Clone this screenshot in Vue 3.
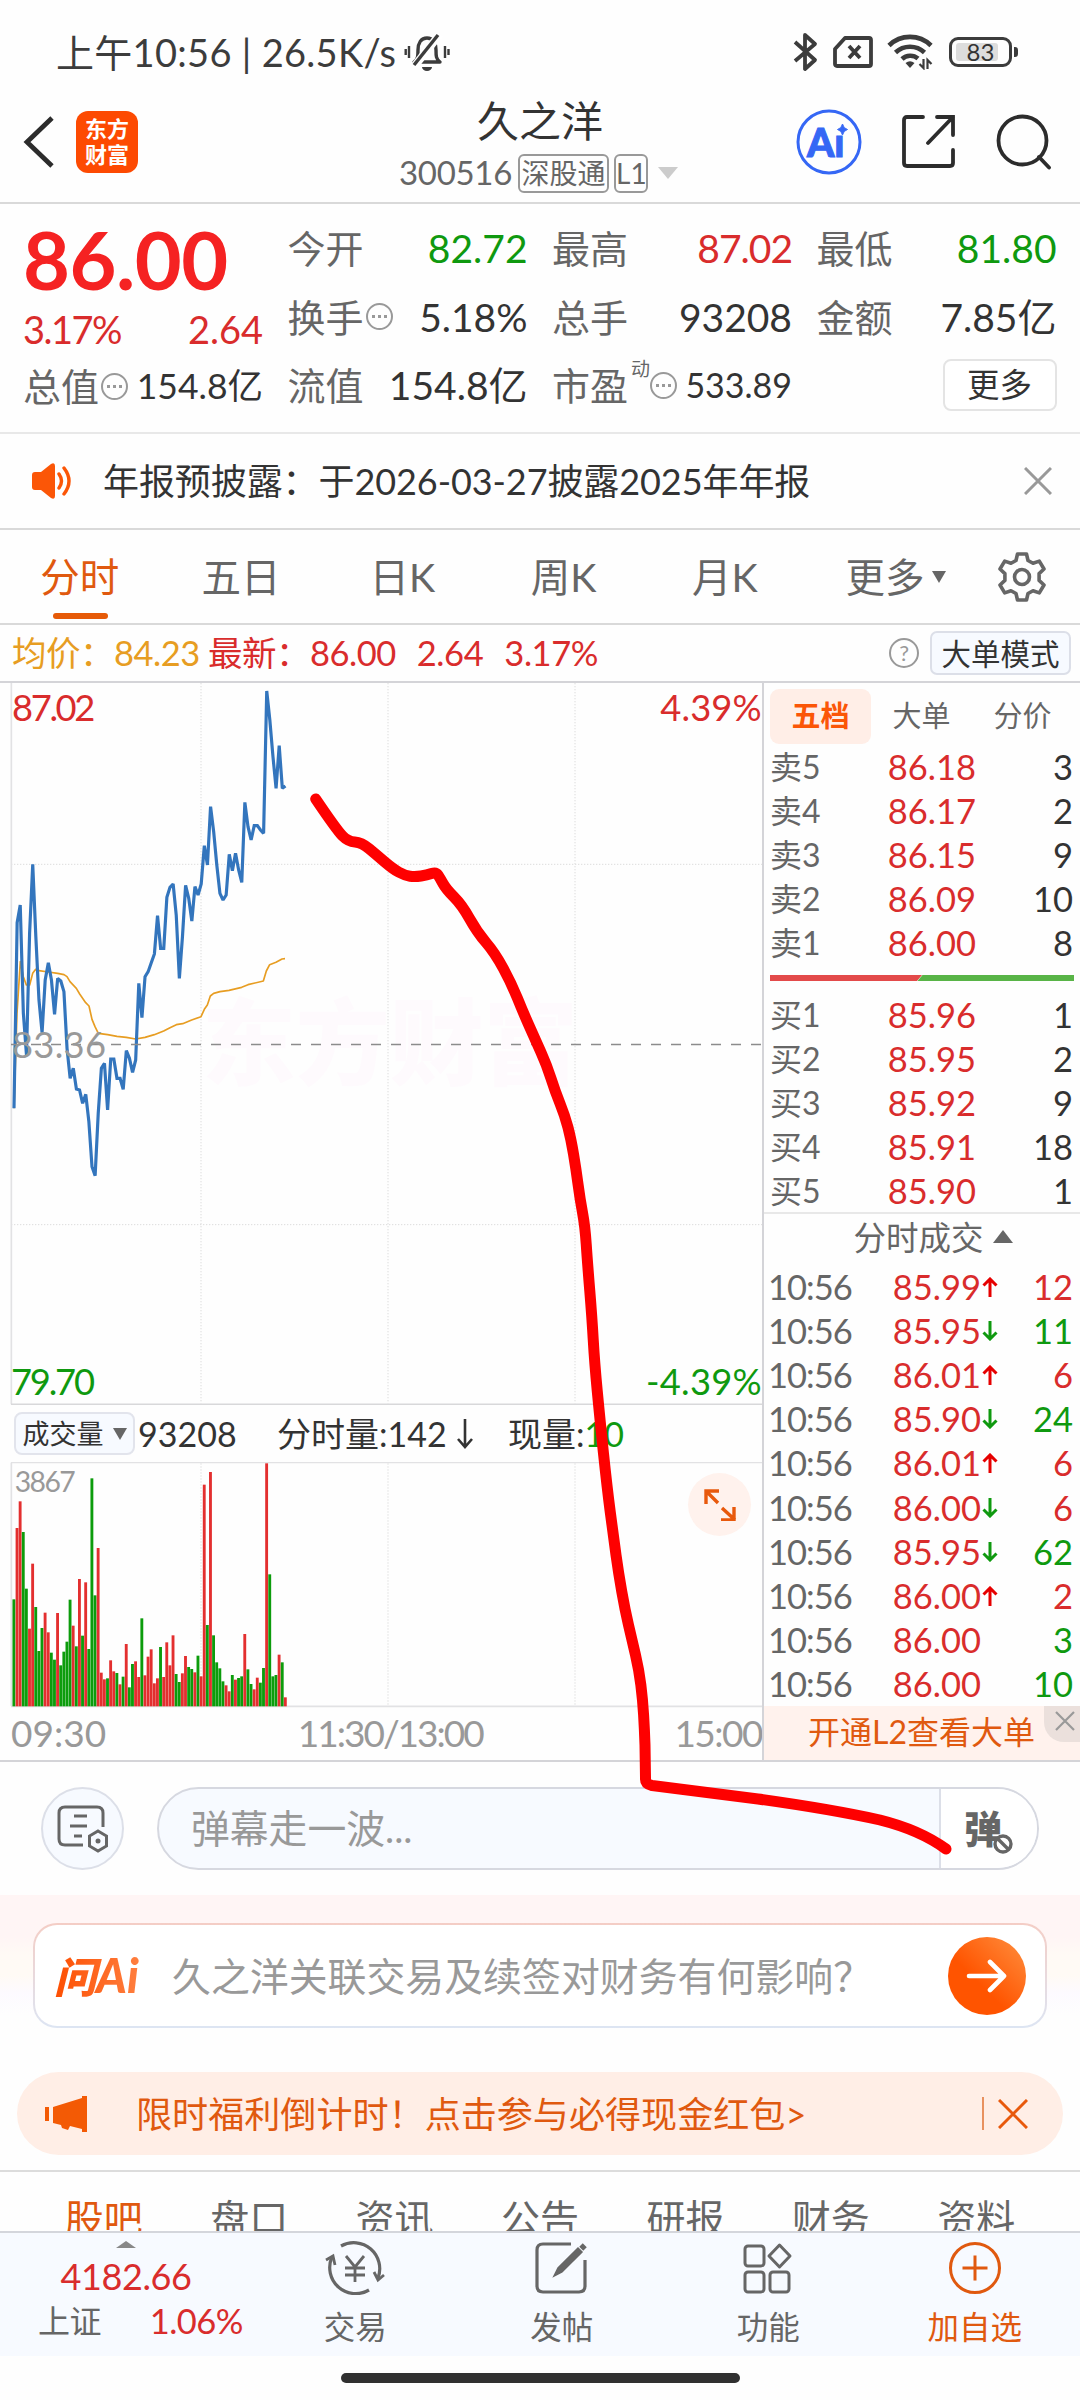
<template>
  <div class="page">
    <div class="status">
      <span class="status-text">上午10:56 | 26.5K/s</span>
      <svg class="status-bell" width="46" height="40" viewBox="0 0 46 40" fill="none" stroke="#3c3c3c" stroke-width="3.4">
        <path d="M10 30h26c-4-3-4-6-4-12 0-7-3-12-9-12s-9 5-9 12c0 6 0 9-4 12z" stroke-linejoin="round" />
        <path d="M36 2L9 36" stroke="#fff" stroke-width="8" />
        <path d="M34 3L10 33" />
        <path d="M5 14v12M1.700 17v6M41 14v12M44.500 17v6" stroke-width="2.400" />
        <path d="M18 35h10a5 4 0 0 1-10 0z" fill="#3c3c3c" stroke="none" />
      </svg>
      <div class="status-right">
        <svg width="26" height="40" viewBox="0 0 26 40" fill="none" stroke="#3c3c3c" stroke-width="3.8">
          <path d="M2 10l20 18-10 9V3l10 9L2 29" stroke-linejoin="round" />
        </svg>
        <svg width="40" height="32" viewBox="0 0 40 32" fill="none" stroke="#3c3c3c" stroke-width="3.8">
          <path d="M12 2h24q2 0 2 2v24q0 2-2 2H4q-2 0-2-2V13z" stroke-linejoin="round" />
          <path d="M16 10l11 12M27 10L16 22" />
        </svg>
        <svg width="48" height="36" viewBox="0 0 48 36" fill="none" stroke="#3c3c3c" stroke-width="4.600">
          <path d="M2 11.500a30 30 0 0 1 42 0M8.500 18.500a21 21 0 0 1 29 0M15 25a12 12 0 0 1 16-.5" />
          <path d="M23 34l-4.500-5q4.500-3.500 9 0z" fill="#3c3c3c" stroke="none" />
          <path d="M36.500 25v9l-4-4M40.500 35v-9l4 4" stroke-width="2.200" />
        </svg>
        <div class="battery"><i></i><b>83</b></div>
      </div>
    </div>

    <header class="header">
      <svg class="back" width="32" height="52" viewBox="0 0 32 52" fill="none" stroke="#2c2c2c" stroke-width="4.800">
        <path d="M29 2L4 26l25 24" />
      </svg>
      <div class="logo"><span>东方</span><span>财富</span></div>
      <div class="title">
        <h1>久之洋</h1>
        <div class="subtitle">
          <span class="code">300516</span>
          <span class="tag">深股通</span>
          <span class="tag tag-l1">L1</span>
          <i class="tri-down light"></i>
        </div>
      </div>
      <div class="header-icons">
        <div class="ai-icon">
          <svg width="66" height="66" viewBox="0 0 66 66">
            <circle cx="33" cy="33" r="31" fill="none" stroke="#3567f5" stroke-width="3" />
            <path d="M46.500 15q1 4.500 5 5.500-4 1-5 5.500-1-4.500-5-5.500 4-1 5-5.500z" fill="#3567f5" stroke="#3567f5" />
          </svg>
          <span>Aı</span>
        </div>
        <svg width="54" height="54" viewBox="0 0 54 54" fill="none" stroke="#2c2c2c" stroke-width="3.800" stroke-linecap="round">
          <path d="M21 2H5Q2 2 2 5v43q0 3 3 3h43q3 0 3-3V35" />
          <path d="M35 2h16v18M51 2L26 28" />
        </svg>
        <svg width="56" height="56" viewBox="0 0 56 56" fill="none" stroke="#2c2c2c" stroke-width="3.800" stroke-linecap="round">
          <circle cx="26.500" cy="26.500" r="24" />
          <path d="M43 43l10 10.500" />
        </svg>
      </div>
    </header>

    <section class="quote">
      <div class="col col-main">
        <div class="last">86.00</div>
        <div class="change"><span>3.17%</span><span>2.64</span></div>
        <div class="cell"><label>总值<i class="dots"></i></label><em class="mid">154.8亿</em></div>
      </div>
      <div class="col">
        <div class="cell"><label>今开</label><em class="green">82.72</em></div>
        <div class="cell"><label>换手<i class="dots"></i></label><em>5.18%</em></div>
        <div class="cell"><label>流值</label><em>154.8亿</em></div>
      </div>
      <div class="col">
        <div class="cell"><label>最高</label><em class="red tight">87.02</em></div>
        <div class="cell"><label>总手</label><em>93208</em></div>
        <div class="cell"><label>市盈<sup>动</sup><i class="dots"></i></label><em class="small">533.89</em></div>
      </div>
      <div class="col">
        <div class="cell"><label>最低</label><em class="green">81.80</em></div>
        <div class="cell"><label>金额</label><em>7.85亿</em></div>
        <div class="cell cell-end"><button class="more">更多</button></div>
      </div>
    </section>

    <section class="notice">
      <svg width="42" height="36" viewBox="0 0 42 36">
        <path d="M1 12q0-3 3-3h6L20 1q4-2 4 2v30q0 4-4 2l-10-8H4q-3 0-3-3z" fill="#fb5607" />
        <path d="M28 11q5 7 0 14M33 5q10 13 0 26" fill="none" stroke="#fb5607" stroke-width="3.400" stroke-linecap="round" />
      </svg>
      <p>年报预披露：于2026-03-27披露2025年年报</p>
      <svg width="28" height="28" viewBox="0 0 28 28" stroke="#999" stroke-width="3"><path d="M1 1l26 26M27 1L1 27" /></svg>
    </section>

    <nav class="tabs">
      <span v-for="(t, i) in periods" :key="t" :class="{ active: i === 0 }">{{ t }}</span>
      <span class="tab-more">更多<i class="tri-down"></i></span>
      <svg class="gear" width="50" height="50" viewBox="0 0 50 50" fill="none" stroke="#666" stroke-width="3.600">
        <path d="M20.500 2h9l1.500 6.500 5 2.800 6.300-2.200 4.700 7.900-4.900 4.600v6.800l4.900 4.600-4.700 7.900-6.300-2.200-5 2.800-1.500 6.500h-9L19 41.500l-5-2.800-6.300 2.200L3 33l4.900-4.600v-6.800L3 17l4.700-7.900L14 11.300l5-2.800z" stroke-linejoin="round" />
        <circle cx="25" cy="25" r="7.500" />
      </svg>
    </nav>

    <div class="avg-row">
      <span class="avg">均价：84.23</span>
      <span class="new">最新：86.00</span>
      <span class="new">2.64</span>
      <span class="new">3.17%</span>
      <i class="help">?</i>
      <button class="mode">大单模式</button>
    </div>

    <main class="market">
      <div class="left">
        <svg class="plot" width="762" height="722" viewBox="0 9 2286 2166">
          <text class="watermark" x="605" y="1195">东方财富</text>
          <g stroke="#dcdcdc" stroke-width="3" fill="none">
            <path d="M603 9V2170M1164 9V2170M1725 9V2170" stroke-dasharray="4 5" />
            <path d="M33 553H2286M33 1634H2286" stroke-dasharray="4 5" />
            <path d="M34 9V2173" stroke="#e2e2e4" stroke-width="5" />
            <path d="M33 2173H2286" stroke="#d8d8da" stroke-width="5" />
          </g>
          <polyline :points="avgPoints" fill="none" stroke="#e79d22" stroke-width="5" stroke-linejoin="round" />
          <polyline :points="pricePoints" fill="none" stroke="#3375bd" stroke-width="9.500" stroke-linejoin="miter" stroke-miterlimit="2" />
          <path d="M33 1093.500H2286" stroke="#8c8c8c" stroke-width="4" stroke-dasharray="30 30" />
          <g class="plot-text">
            <text x="36" y="122" fill="#d92c2c" textLength="250">87.02</text>
            <text x="1981" y="122" fill="#d92c2c" textLength="304">4.39%</text>
            <text x="36" y="1133" fill="#999" textLength="282">83.36</text>
            <text x="33" y="2144" fill="#0f990f" textLength="252">79.70</text>
            <text x="1938" y="2144" fill="#0f990f" textLength="347">-4.39%</text>
          </g>
        </svg>

        <div class="vol-head">
          <button class="indicator">成交量<i class="tri-down"></i></button>
          <span class="vol-total">93208</span>
          <span class="vol-minute">分时量:142<svg width="16" height="30" viewBox="0 0 16 30" fill="none" stroke="#333" stroke-width="2.600"><path d="M8 0v28M1 20l7 8 7-8" /></svg></span>
          <span class="vol-now">现量:<b>10</b></span>
        </div>

        <div class="vol-wrap">
          <svg width="762" height="246" viewBox="0 305 2286 738">
            <g stroke="#dcdcdc" stroke-width="3" fill="none">
              <path d="M603 309V1037M1164 309V1037M1725 309V1037" stroke-dasharray="4 5" />
              <path d="M33 307H2286" stroke="#e2e2e4" stroke-width="4" />
              <path d="M34 307V1037" stroke="#e2e2e4" stroke-width="5" />
              <path d="M33 1038H2286" stroke="#e2e2e4" stroke-width="5" />
            </g>
            <rect
              v-for="bar in bars"
              :key="bar.x"
              :x="bar.x"
              :y="bar.top"
              width="8.600"
              :height="1038 - bar.top"
              :fill="bar.up ? '#e32f2f' : '#0c9c0c'"
            />
            <text class="vol-max" x="44" y="395" textLength="183">3867</text>
          </svg>
          <div class="expand">
            <svg width="32" height="32" viewBox="0 0 32 32" fill="none" stroke="#e8590c" stroke-width="3.400">
              <path d="M2 15V2h13M2 2l12 12M30 18v13H17M31 31L18 19" />
            </svg>
          </div>
        </div>

        <div class="axis"><span>09:30</span><span>11:30/13:00</span><span>15:00</span></div>
      </div>

      <aside class="right">
        <div class="book-tabs"><span class="on">五档</span><span>大单</span><span>分价</span></div>
        <div v-for="r in asks" :key="r[0]" class="book-row">
          <span>{{ r[0] }}</span><em>{{ r[1] }}</em><b>{{ r[2] }}</b>
        </div>
        <div class="ratio">
          <svg width="304" height="6" viewBox="0 0 304 6">
            <path d="M0 0h152l-5 6H0z" fill="#e34a4a" />
            <path d="M152.500 0H304v6H147.500z" fill="#58b447" />
          </svg>
        </div>
        <div v-for="r in bids" :key="r[0]" class="book-row">
          <span>{{ r[0] }}</span><em>{{ r[1] }}</em><b>{{ r[2] }}</b>
        </div>
        <div class="deal-head">分时成交<i class="tri-up"></i></div>
        <div v-for="(d, i) in deals" :key="i" class="deal-row">
          <span>10:56</span>
          <em>{{ d[0] }}</em>
          <svg width="16" height="20" viewBox="0 0 16 20" fill="none" stroke-width="3">
            <path v-if="d[1] === 'up'" d="M8 20V2M1.500 8.500L8 2l6.500 6.500" stroke="#e60000" />
            <path v-if="d[1] === 'down'" d="M8 0v18M1.500 11.500L8 18l6.500-6.500" stroke="#0f990f" />
          </svg>
          <b :class="d[3]">{{ d[2] }}</b>
        </div>
        <div class="l2">
          开通L2查看大单
          <i><svg width="20" height="20" viewBox="0 0 20 20" stroke="#999" stroke-width="2.200"><path d="M1 1l18 18M19 1L1 19" /></svg></i>
        </div>
      </aside>
    </main>

    <section class="danmu">
      <div class="danmu-set">
        <svg width="52" height="48" viewBox="0 0 52 48" fill="none" stroke="#666" stroke-width="3">
          <path d="M26 40H8q-6 0-6-6V8q0-6 6-6h32q6 0 6 6v14M17 11h13M13 21h17M17 31h8" />
          <path d="M41 26l8.500 5v10L41 46l-8.500-5V31z" />
          <circle cx="41" cy="36" r="2.500" fill="#666" stroke="none" />
        </svg>
      </div>
      <div class="danmu-input">
        <span>弹幕走一波...</span>
        <div class="danmu-toggle">
          <b>弹</b>
          <svg width="22" height="22" viewBox="0 0 22 22" stroke="#666" stroke-width="3.400">
            <circle cx="11" cy="11" r="8" fill="#fff" />
            <path d="M6 6l10 10" />
          </svg>
        </div>
      </div>
    </section>

    <section class="ask">
      <div class="ask-box">
        <span class="ask-logo">问<b>Ai</b></span>
        <p>久之洋关联交易及续签对财务有何影响？</p>
        <div class="ask-go">
          <svg width="42" height="34" viewBox="0 0 42 34" fill="none" stroke="#fff" stroke-width="4.600" stroke-linecap="round" stroke-linejoin="round">
            <path d="M3 17h35M24 3l14 14-14 14" />
          </svg>
        </div>
      </div>
    </section>

    <section class="promo">
      <svg width="42" height="36" viewBox="0 0 42 36" fill="#f35a05">
        <path d="M0 11h4v14H0zM8 11L37 2V0h5v36h-5v-3l-12-3-2 4-6-2-1-3-8-2z" />
      </svg>
      <p>限时福利倒计时！点击参与必得现金红包&gt;</p>
      <i class="bar"></i>
      <svg width="30" height="30" viewBox="0 0 30 30" stroke="#e8590c" stroke-width="3"><path d="M1 1l28 28M29 1L1 29" /></svg>
    </section>

    <nav class="sub-tabs">
      <span v-for="(t, i) in sections" :key="t" :class="{ active: i === 0 }">{{ t }}</span>
    </nav>

    <footer class="footer">
      <div class="index">
        <i class="tri-up small"></i>
        <div class="index-value">4182.66</div>
        <div class="index-row"><span>上证</span><b>1.06%</b></div>
      </div>
      <div class="foot-item">
        <svg width="60" height="54" viewBox="0 0 60 54" fill="none" stroke="#666" stroke-width="3.200">
          <path d="M16 5a26 26 0 0 1 37 32M44 49A26 26 0 0 1 7 16" />
          <path d="M1 19l7-4 2 9M59 34l-6 5-4-8" stroke-width="2.800" />
          <path d="M21 15l9 11 9-11M30 26v15M20 27h20M20 34h20" stroke-width="2.800" />
        </svg>
        <span>交易</span>
      </div>
      <div class="foot-item">
        <svg width="54" height="54" viewBox="0 0 54 54" fill="none" stroke="#666" stroke-width="3.200">
          <path d="M36 3H8Q2 3 2 9v36q0 6 6 6h36q6 0 6-6V19" />
          <path d="M19 35l4-8L43 7l4 4-20 20z" fill="#666" stroke-width="1.500" />
          <path d="M46 4l4 4" stroke-width="5" />
        </svg>
        <span>发帖</span>
      </div>
      <div class="foot-item">
        <svg width="50" height="54" viewBox="0 0 50 54" fill="none" stroke="#666" stroke-width="3">
          <rect x="2" y="5" width="19" height="20" rx="3" />
          <rect x="2" y="31" width="19" height="20" rx="3" />
          <rect x="27" y="31" width="19" height="20" rx="3" />
          <path d="M36.500 4L47 15 36.500 26 26 15z" stroke-linejoin="round" />
        </svg>
        <span>功能</span>
      </div>
      <div class="foot-item add">
        <svg width="54" height="54" viewBox="0 0 54 54" fill="none" stroke="#e0590f" stroke-width="3">
          <circle cx="27" cy="27" r="24.500" />
          <path d="M27 14.500v25M14.500 27h25" />
        </svg>
        <span>加自选</span>
      </div>
    </footer>
    <div class="home"><i></i></div>

    <svg class="scribble" width="1080" height="2400" viewBox="0 0 1080 2400">
      <path :d="scribblePath" fill="none" stroke="#fe0000" stroke-width="11" stroke-linecap="round" stroke-linejoin="round" />
    </svg>
  </div>
</template>

<script setup>
const periods = ['分时', '五日', '日K', '周K', '月K'];
const sections = ['股吧', '盘口', '资讯', '公告', '研报', '财务', '资料'];

const asks = [
  ['卖5', '86.18', 3],
  ['卖4', '86.17', 2],
  ['卖3', '86.15', 9],
  ['卖2', '86.09', 10],
  ['卖1', '86.00', 8],
];
const bids = [
  ['买1', '85.96', 1],
  ['买2', '85.95', 2],
  ['买3', '85.92', 9],
  ['买4', '85.91', 18],
  ['买5', '85.90', 1],
];
const deals = [
  ['85.99', 'up', 12, 'red'],
  ['85.95', 'down', 11, 'green'],
  ['86.01', 'up', 6, 'red'],
  ['85.90', 'down', 24, 'green'],
  ['86.01', 'up', 6, 'red'],
  ['86.00', 'down', 6, 'red'],
  ['85.95', 'down', 62, 'green'],
  ['86.00', 'up', 2, 'red'],
  ['86.00', '', 3, 'green'],
  ['86.00', '', 10, 'green'],
];

// 每分钟一个点
const STEP = 9.36;
const priceY = [
  1285, 728, 675, 1000, 1125, 760, 553, 770, 960, 1058, 900, 848, 900, 1003, 895, 903,
  935, 1105, 1195, 1165, 1227, 1230, 1270, 1243, 1325, 1460, 1487, 1300, 1165, 1150, 1290, 1137,
  1137, 1195, 1195, 1228, 1112, 1135, 1177, 1140, 910, 1013, 890, 875, 848, 822, 707, 805,
  805, 652, 622, 612, 705, 895, 770, 616, 655, 723, 620, 645, 612, 497, 555, 380,
  455, 555, 640, 660, 645, 523, 572, 520, 570, 607, 367, 440, 480, 437, 437, 450,
  460, 33, 120, 230, 325, 197, 325, 318,
];
const pricePoints = priceY.map((y, i) => `${(42 + i * STEP).toFixed(1)},${y}`).join(' ');

const avgPoints =
  '42,1285 51,1000 61,845 70,890 79,915 89,915 98,880 107,868 117,872 145,876 173,880 192,884 201,890 ' +
  '210,905 229,925 239,942 257,968 267,978 276,1018 285,1040 295,1060 323,1064 351,1069 379,1072 407,1077 ' +
  '435,1072 463,1064 491,1053 510,1043 529,1034 548,1031 575,1020 603,1010 613,988 622,975 631,948 641,940 ' +
  '660,935 687,931 725,922 744,914 790,903 799,873 809,854 828,847 846,837 855,836';

// 正数为红柱，负数为绿柱
const volumes = [
  -717, 503, 423, -515, -685, 805, 610, -740, -872, -803, 757, 816, -877, -898, 758, -915,
  -874, -844, -718, 796, -858, 656, -826, 666, -866, -354, -705, 563, 937, 957, -954, 900,
  933, -938, 972, -949, 851, -981, -911, 903, 950, -774, 945, 889, 867, 969, 954, -860,
  950, 846, 915, 825, -941, -965, 939, 887, -920, -926, 936, -886, 948, 373, -794, 335,
  -825, -906, -924, -963, 975, 993, -944, 958, -953, -948, 821, -927, -971, 987, 952, -967,
  -923, 309, -642, -948, -944, 883, -906, 1011,
];
const bars = volumes.map((v, i) => ({
  x: +(37.4 + i * STEP).toFixed(1),
  top: Math.abs(v),
  up: v > 0,
}));

const scribble = [
  [315.7, 799], [336.7, 830], [348, 841.5], [361.7, 842.5], [376.7, 855], [393, 869], [405, 875.5], [415, 877],
  [427, 875], [436, 872], [440, 878], [446, 889], [462, 905], [477, 932], [495, 953], [511.7, 984],
  [523, 1012], [535, 1039], [546.7, 1065], [555, 1091], [565, 1116], [571, 1139], [576, 1169], [580, 1199],
  [585, 1226], [587.5, 1263], [592, 1318], [594.5, 1362], [600, 1420], [607, 1487], [613.5, 1537], [618.5, 1573],
  [625, 1610], [632, 1640], [639, 1670], [642.7, 1700], [644.5, 1730], [645.5, 1760],
];
let scribblePath = `M${scribble[0].join(' ')}`;
for (let i = 1; i < scribble.length - 1; i++) {
  const [x, y] = scribble[i];
  const [nx, ny] = scribble[i + 1];
  scribblePath += `Q${x} ${y} ${(x + nx) / 2} ${(y + ny) / 2}`;
}
scribblePath += 'L645.5 1778Q645 1784 652 1785.500L758 1799Q830 1809 880 1820Q920 1830 946 1849';
</script>

<style>
body {
  background: #fff;
}
</style>

<style scoped>
.page {
  position: relative;
  width: 1080px;
  height: 2400px;
  overflow: hidden;
  background: #fefefe;
  color: #333;
  font-family: Lato, "Noto Sans CJK SC", sans-serif;
  display: flex;
  flex-direction: column;
}

.page * {
  box-sizing: border-box;
}

.page > * {
  flex-shrink: 0;
}

svg {
  display: block;
  flex-shrink: 0;
}

i,
em {
  font-style: normal;
}

b {
  font-weight: 400;
}

button {
  font-family: inherit;
  padding: 0;
  color: #333;
  white-space: nowrap;
}

.red {
  color: #d92c2c;
}

.green {
  color: #0f990f;
}

.tri-down {
  display: inline-block;
  border: 7px solid transparent;
  border-top: 12px solid #666;
  border-bottom: 0;
}

.tri-down.light {
  border-width: 12px 10px 0;
  border-top-color: #ccc;
}

.tri-up {
  display: inline-block;
  border: 10px solid transparent;
  border-bottom: 13px solid #666;
  border-top: 0;
}

/* 状态栏 */
.status {
  height: 100px;
  padding: 4px 61px 0 56px;
  display: flex;
  align-items: center;
}

.status-text {
  font-size: 38px;
  line-height: 50px;
  padding-bottom: 1px;
  color: #3c3c3c;
  letter-spacing: 0.3px;
  white-space: nowrap;
}

.status-bell {
  margin-left: 8px;
}

.status-right {
  margin-left: auto;
  display: flex;
  align-items: center;
  gap: 14px;
}

.battery {
  position: relative;
  width: 63px;
  height: 30px;
  margin-right: 7px;
  border: 3px solid #3c3c3c;
  border-radius: 9px;
}

.battery i {
  display: block;
  width: 42px;
  height: 18px;
  margin: 3px 4px;
  border-radius: 3px;
  background: #ddd;
}

.battery::after {
  content: "";
  position: absolute;
  right: -9px;
  top: 7px;
  width: 4px;
  height: 10px;
  border-radius: 0 3px 3px 0;
  background: #3c3c3c;
}

.battery b {
  position: absolute;
  inset: 0;
  text-align: center;
  font-size: 24px;
  line-height: 24px;
}

/* 头部 */
.header {
  position: relative;
  height: 104px;
  border-bottom: 2px solid #d9d9d9;
  display: flex;
  align-items: center;
  padding: 0 28px 19px 23px;
}

.logo {
  width: 62px;
  height: 62px;
  margin-left: 21px;
  border-radius: 12px;
  background: #fd4a02;
  color: #fff;
  font-size: 22px;
  font-weight: 700;
  line-height: 26px;
  display: flex;
  flex-direction: column;
  align-items: center;
  justify-content: center;
}

.title {
  width: 300px;
  margin-left: 261px;
  padding-top: 14px;
}

.title h1 {
  position: relative;
  top: -5px;
  margin: 0 0 0 -18px;
  font-size: 42px;
  line-height: 44px;
  font-weight: 400;
  text-align: center;
}

.subtitle {
  display: flex;
  align-items: center;
  height: 40px;
  margin-top: 5px;
  color: #666;
  font-size: 33px;
  line-height: 40px;
}

.code {
  width: 119px;
  padding-bottom: 2px;
  letter-spacing: -0.3px;
}

.tag {
  width: 91px;
  height: 39px;
  border: 2px solid #999;
  border-radius: 6px;
  font-size: 28px;
  line-height: 34px;
  text-align: center;
  white-space: nowrap;
}

.tag-l1 {
  width: 34px;
  margin: 0 10px 0 5px;
}

.header-icons {
  display: flex;
  align-items: center;
  margin-left: auto;
}

.header-icons > * {
  margin-left: 40px;
}

.ai-icon {
  position: relative;
}

.ai-icon span {
  position: absolute;
  left: 11px;
  top: 11px;
  font-size: 39px;
  line-height: 44px;
  font-weight: 900;
  color: #3567f5;
  -webkit-text-stroke: 1px #3567f5;
}

/* 报价 */
.quote {
  height: 230px;
  padding: 10px 23px 0;
  border-bottom: 2px solid #e8e8e8;
  display: flex;
  gap: 24.500px;
}

.col {
  width: 240px;
}

.last {
  height: 90px;
  font-size: 81px;
  line-height: 90px;
  font-weight: 700;
  letter-spacing: -0.5px;
  color: #f52222;
}

.change {
  height: 48px;
  line-height: 50px;
  font-size: 38px;
  color: #d92c2c;
  display: flex;
  justify-content: space-between;
}

.change span:first-child {
  letter-spacing: -1.500px;
}

.cell {
  height: 68.500px;
  line-height: 68px;
  display: flex;
  align-items: center;
  justify-content: space-between;
  white-space: nowrap;
}

.cell label {
  position: relative;
  display: flex;
  align-items: center;
  font-size: 38px;
  color: #666;
}

.cell em {
  font-size: 39px;
}

.cell em.tight {
  letter-spacing: -1px;
}

.cell em.mid {
  font-size: 35.500px;
}

.cell em.small {
  font-size: 34px;
}

.cell sup {
  align-self: flex-start;
  margin: 5px 0 0 3px;
  font-size: 19px;
  line-height: 26px;
  width: 17px;
}

.cell-end {
  justify-content: flex-end;
}

.dots {
  position: relative;
  width: 27px;
  height: 27px;
  margin-left: 2px;
  border: 2px solid #999;
  border-radius: 50%;
}

.dots::before {
  content: "";
  position: absolute;
  left: 10px;
  top: 10px;
  width: 3px;
  height: 3px;
  background: #999;
  box-shadow: -6px 0 #999, 6px 0 #999;
}

.more {
  width: 114px;
  height: 52px;
  border: 2px solid #e4e4e4;
  border-radius: 8px;
  background: #fff;
  font-size: 32.500px;
  line-height: 46px;
}

/* 公告 */
.notice {
  height: 96px;
  padding: 0 28px 0 31px;
  border-bottom: 2px solid #d9d9d9;
  display: flex;
  align-items: center;
}

.notice p {
  flex: 1;
  margin: 0 0 0 30px;
  font-size: 36px;
  line-height: 50px;
  letter-spacing: -0.08px;
}

/* 周期 */
.tabs {
  position: relative;
  height: 95px;
  border-bottom: 2px solid #d9d9d9;
  display: flex;
  align-items: center;
  color: #666;
  font-size: 39.500px;
  line-height: 92px;
}

.tabs span {
  position: relative;
  left: -1px;
  width: 161.300px;
  text-align: center;
}

.tabs .active {
  color: #e0590f;
}

.tabs .active::after {
  content: "";
  position: absolute;
  left: 54px;
  bottom: 4px;
  width: 55px;
  height: 6px;
  border-radius: 3px;
  background: #e65a07;
}

.tabs span.tab-more {
  width: 150px;
  margin-left: 9px;
  padding-left: 31px;
  display: flex;
  align-items: center;
  gap: 8px;
  text-align: left;
}

.tabs .gear {
  margin-left: 32px;
}

/* 均价行 */
.avg-row {
  height: 58px;
  padding: 0 9px 0 12px;
  border-bottom: 2px solid #d4d4d8;
  display: flex;
  align-items: center;
  font-size: 34.500px;
  line-height: 56px;
  letter-spacing: -0.5px;
  white-space: nowrap;
}

.avg {
  width: 196px;
  color: #e79d22;
}

.new {
  color: #d92c2c;
  margin-right: 21px;
}

.new + .new {
  letter-spacing: -0.4px;
}

.help {
  width: 30px;
  height: 30px;
  margin-left: auto;
  margin-right: 11px;
  border: 2px solid #999;
  border-radius: 50%;
  color: #999;
  font-size: 22px;
  line-height: 26px;
  text-align: center;
}

.mode {
  width: 141px;
  height: 44px;
  border: 2px solid #dcdfe8;
  border-radius: 7px;
  background: #f7faff;
  font-size: 29.500px;
  line-height: 39px;
}

/* 行情 */
.market {
  height: 1079px;
  border-bottom: 2px solid #d4d4d8;
  display: flex;
}

.left {
  width: 762px;
}

.plot-text {
  font-size: 109px;
}

.watermark {
  font-size: 282px;
  font-weight: 900;
  fill: #fefafd;
}

.vol-head {
  height: 57px;
  padding-left: 14px;
  display: flex;
  align-items: center;
  font-size: 34px;
  line-height: 54px;
  white-space: nowrap;
}

.indicator {
  width: 121px;
  height: 43px;
  border: 2px solid #e2e4ec;
  border-radius: 8px;
  background: #f7faff;
  font-size: 27px;
  line-height: 38px;
  display: flex;
  align-items: center;
  justify-content: center;
  gap: 9px;
}

.vol-total {
  width: 142px;
  padding-left: 3px;
}

.vol-minute {
  width: 231px;
  display: flex;
  align-items: center;
  gap: 10px;
}

.vol-now b {
  color: #0f990f;
}

.vol-wrap {
  position: relative;
}

.vol-max {
  font-size: 85px;
  fill: #999;
}

.expand {
  position: absolute;
  left: 688px;
  top: 11px;
  width: 63px;
  height: 63px;
  border-radius: 50%;
  background: #fff2ed;
  display: grid;
  place-items: center;
}

.axis {
  height: 52px;
  padding: 0 0 0 11px;
  display: flex;
  justify-content: space-between;
  font-size: 37px;
  line-height: 50px;
  color: #999;
}

.axis span:nth-child(2) {
  letter-spacing: -2px;
}

.axis span:nth-child(3) {
  letter-spacing: -1.500px;
}

.right {
  width: 318px;
  border-left: 2px solid #d4d4d8;
}

.book-tabs {
  display: flex;
  height: 62px;
  padding: 6px 0 0 6px;
}

.book-tabs span {
  width: 101px;
  height: 55px;
  font-size: 29px;
  line-height: 53px;
  text-align: center;
  color: #666;
}

.book-tabs .on {
  border-radius: 9px;
  background: #ffeee7;
  color: #fb5607;
  font-weight: 700;
}

.book-row,
.deal-row {
  height: 44px;
  padding: 0 7px 0 6px;
  display: flex;
  align-items: center;
  font-size: 34.500px;
  line-height: 44px;
}

.book-row span {
  width: 60px;
  color: #666;
  font-size: 32px;
  white-space: nowrap;
}

.book-row em,
.deal-row em {
  width: 146px;
  text-align: right;
  color: #d92c2c;
}

.book-row b,
.deal-row b {
  flex: 1;
  text-align: right;
}

.ratio {
  height: 28px;
  padding: 10px 0 0 6px;
}

.deal-head {
  height: 53px;
  margin-top: -1px;
  border-top: 2px solid #e8e8e8;
  display: flex;
  align-items: flex-start;
  justify-content: center;
  gap: 9px;
  padding-left: 22px;
  color: #666;
  font-size: 32.500px;
  line-height: 48px;
}

.deal-head .tri-up {
  margin-top: 16px;
}

.deal-row {
  height: 44.100px;
  padding-left: 4px;
}

.deal-row span {
  width: 90px;
  color: #666;
  letter-spacing: -1px;
}

.deal-row em {
  width: 123px;
}

.deal-row svg {
  margin-left: 1px;
}

.deal-row b.red {
  color: #d92c2c;
}

.l2 {
  position: relative;
  height: 54px;
  background: #fff2ed;
  color: #e0590f;
  font-size: 32px;
  line-height: 51px;
  padding-left: 44px;
}

.l2 i {
  position: absolute;
  right: 0;
  top: 0;
  width: 36px;
  height: 36px;
  padding: 5px 0 0 11px;
  border-radius: 0 0 0 20px;
  background: #ebe0dc;
}

/* 弹幕 */
.danmu {
  height: 133px;
  padding: 25px 41px 0;
  display: flex;
  justify-content: space-between;
}

.danmu-set {
  width: 83px;
  height: 83px;
  border: 2px solid #dcdfe8;
  border-radius: 50%;
  background: #f7faff;
  display: grid;
  place-items: center;
}

.danmu-input {
  width: 882px;
  height: 83px;
  border: 2px solid #d6d8e0;
  border-radius: 42px;
  background: #f7faff;
  overflow: hidden;
  display: flex;
  justify-content: space-between;
  padding-left: 32px;
  color: #999;
  font-size: 38.800px;
  line-height: 78px;
}

.danmu-toggle {
  position: relative;
  width: 98px;
  border-left: 2px solid #dcdfe8;
  background: #fff;
  padding-left: 23px;
}

.danmu-toggle b {
  font-size: 38px;
  line-height: 74px;
  font-weight: 900;
  color: #666;
}

.danmu-toggle svg {
  position: absolute;
  left: 51px;
  top: 44px;
}

/* 问AI */
.ask {
  height: 177px;
  padding: 28px 33px 0;
  background: linear-gradient(#fff5f5 0, #fff5f5 42px, #fffaf5 60px, #fffaf5 80px, #fdfaff 98px, #fefefe 120px);
}

.ask-box {
  height: 105px;
  border: 2px solid transparent;
  border-radius: 24px;
  background:
    linear-gradient(#fff, #fff) padding-box,
    linear-gradient(#f4cdc5, #dde5f3) border-box;
  display: flex;
  align-items: center;
  padding: 0 19px;
}

.ask-logo {
  width: 118px;
  font-size: 42px;
  font-weight: 900;
  font-style: italic;
  line-height: 60px;
  white-space: nowrap;
  color: transparent;
  background: linear-gradient(90deg, #fd4f02, #ff8142 90px);
  -webkit-background-clip: text;
  background-clip: text;
}

.ask-logo b {
  font-size: 47px;
  font-weight: 900;
}

.ask-box p {
  flex: 1;
  margin: 0;
  font-size: 38.900px;
  line-height: 60px;
  color: #999;
  white-space: nowrap;
}

.ask-go {
  width: 78px;
  height: 78px;
  border-radius: 50%;
  background: linear-gradient(45deg, #ff5400 40%, #ff9040);
  display: grid;
  place-items: center;
}

/* 福利条 */
.promo {
  height: 83px;
  margin: 0 17px;
  padding: 0 35px 0 28px;
  border-radius: 42px;
  background: #ffeee6;
  display: flex;
  align-items: center;
  color: #e0590f;
}

.promo p {
  flex: 1;
  margin: 0 0 0 49px;
  font-size: 36.100px;
  line-height: 60px;
}

.promo .bar {
  width: 2px;
  height: 33px;
  margin-right: 14px;
  background: #e8915f;
}

/* 下方标签 */
.sub-tabs {
  height: 61px;
  margin-top: 15px;
  border-top: 2px solid #dcdcdc;
  padding: 0 31px;
  overflow: hidden;
  display: grid;
  grid-template-columns: repeat(7, 1fr);
  text-align: center;
  font-size: 39px;
  line-height: 92px;
  color: #666;
}

.sub-tabs .active {
  color: #e0590f;
}

.footer {
  height: 125px;
  border-top: 2px solid #d4d6dc;
  background: #f7faff;
  display: flex;
}

.index {
  width: 252px;
  display: flex;
  flex-direction: column;
  align-items: center;
  color: #d92c2c;
}

.tri-up.small {
  margin-top: 8px;
  border-width: 0 10px 7px;
  border-bottom-color: #888;
}

.index-value {
  margin-top: 6px;
  font-size: 36px;
  line-height: 44px;
  letter-spacing: -0.4px;
}

.index-row {
  width: 252px;
  padding: 0 9px 0 38px;
  display: flex;
  justify-content: space-between;
  font-size: 34.500px;
  line-height: 46px;
  letter-spacing: -0.5px;
}

.index-row span {
  font-size: 32px;
  color: #666;
}

.foot-item {
  width: 206.500px;
  padding-top: 8px;
  display: flex;
  flex-direction: column;
  align-items: center;
  font-size: 31.500px;
  line-height: 46px;
  color: #666;
}

.foot-item span {
  margin-top: 9px;
}

.foot-item.add {
  color: #e0590f;
}

.home {
  height: 43px;
  padding-top: 17px;
}

.home i {
  display: block;
  width: 399px;
  height: 10px;
  margin: 0 auto;
  border-radius: 5px;
  background: #303030;
}

/* 手绘走势 */
.scribble {
  position: absolute;
  left: 0;
  top: 0;
  pointer-events: none;
}
</style>
